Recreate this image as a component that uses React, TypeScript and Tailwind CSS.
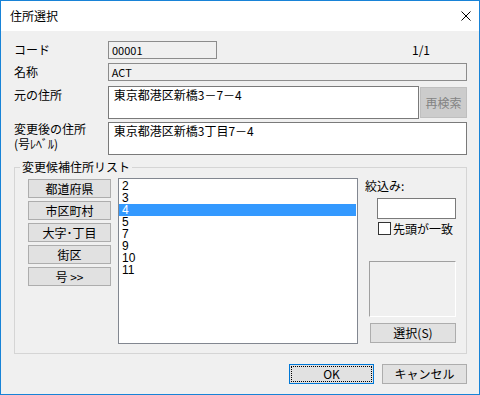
const jp = "font-['Noto_Sans_CJK_JP',sans-serif]";

function Btn({ label, className = "" }: { label: string; className?: string }) {
  return (
    <div
      className={`flex items-center justify-center bg-[#e1e1e1] border border-[#adadad] text-[12px] leading-[12px] text-black ${className}`}
    >
      {label}
    </div>
  );
}

const items = ["2", "3", "4", "5", "7", "9", "10", "11"];

export default function App() {
  return (
    <div className={`w-[480px] h-[395px] flex flex-col border border-[#1883d7] bg-[#f0f0f0] text-black ${jp}`}>
      {/* title bar */}
      <div className="h-[30px] bg-white flex items-center pl-[9px] pr-[8px]">
        <span className="text-[12px] leading-[14px]">住所選択</span>
        <svg className="ml-auto" width="10" height="10" viewBox="0 0 10 10">
          <path d="M0.5 0.5 L9.5 9.5 M9.5 0.5 L0.5 9.5" stroke="#000" strokeWidth="1" fill="none" />
        </svg>
      </div>

      <div className="flex flex-col pl-[13px] pr-[12px]">
        {/* コード */}
        <div className="mt-[10px] flex items-center h-[18px]">
          <span className="w-[94px] text-[12px] leading-[12px]">コード</span>
          <div className="w-[109px] h-[18px] border border-[#8c8c8c] bg-[#f0f0f0] pl-[3px] text-[11px] leading-[16px]">
            00001
          </div>
          <span className="ml-[195px] text-[12px] leading-[12px]">1/1</span>
        </div>

        {/* 名称 */}
        <div className="mt-[4px] flex items-center h-[18px]">
          <span className="w-[94px] text-[12px] leading-[12px]">名称</span>
          <div className="w-[360px] h-[18px] border border-[#8c8c8c] bg-[#f0f0f0] pl-[3px] text-[11px] leading-[16px]">
            ACT
          </div>
        </div>

        {/* 元の住所 */}
        <div className="mt-[5px] flex h-[33px]">
          <span className="w-[94px] pt-[3px] text-[12px] leading-[12px]">元の住所</span>
          <div className="w-[312px] h-[33px] border border-[#7a7a7a] bg-white pl-[5px] pt-[1px] text-[12px] leading-[14px]">
            東京都港区新橋3－7－4
          </div>
          <div className="ml-[1px] mt-[1px] w-[47px] h-[31px] flex items-center justify-center bg-[#cccccc] border border-[#bfbfbf] text-[12px] text-[#838383]">
            再検索
          </div>
        </div>

        {/* 変更後の住所 */}
        <div className="mt-[3px] flex h-[33px]">
          <div className="w-[94px] flex flex-col text-[12px] leading-[15px] -mt-[1px]">
            <span>変更後の住所</span>
            <span>(号ﾚﾍﾞﾙ)</span>
          </div>
          <div className="w-[360px] h-[33px] border border-[#7a7a7a] bg-white pl-[5px] pt-[1px] text-[12px] leading-[14px]">
            東京都港区新橋3丁目7－4
          </div>
        </div>

        {/* group */}
        <fieldset className="mt-[6px] w-[453px] border border-[#d5d5d5]">
          <legend className="ml-[5px] px-[2px] text-[12px] leading-[12px]">変更候補住所リスト</legend>
          <div className="flex pl-[13px] pt-[5px] pb-[9px]">
            <div className="mt-[1px] w-[83px] flex flex-col gap-[3px]">
              <Btn label="都道府県" className="h-[19px]" />
              <Btn label="市区町村" className="h-[19px]" />
              <Btn label="大字･丁目" className="h-[19px]" />
              <Btn label="街区" className="h-[19px]" />
              <Btn label="号 >>" className="h-[19px]" />
            </div>

            <div className="ml-[7px] w-[240px] h-[166px] border border-[#828790] bg-white pt-[1px] font-['Liberation_Sans',sans-serif]">
              {items.map((it) => (
                <div
                  key={it}
                  className={`h-[12px] pl-[3px] text-[12px] leading-[12px] ${it === "4" ? "bg-[#3399ff] text-white mr-[1px]" : ""}`}
                >
                  {it}
                </div>
              ))}
            </div>

            <div className="ml-[7px] flex flex-col">
              <span className="mt-[2px] text-[12px] leading-[12px]">絞込み:</span>
              <div className="mt-[6px] ml-[12px] w-[79px] h-[21px] border border-[#7a7a7a] bg-white" />
              <div className="mt-[3px] ml-[13px] flex items-center h-[13px]">
                <div className="w-[13px] h-[13px] border border-[#333333] bg-white" />
                <span className="ml-[2px] text-[12px] leading-[12px]">先頭が一致</span>
              </div>
              <div className="mt-[26px] ml-[4px] w-[87px] h-[56px] border border-t-[#a0a0a0] border-l-[#a0a0a0] border-r-white border-b-white" />
              <Btn label="選択(S)" className="mt-[6px] ml-[5px] w-[86px] h-[20px]" />
            </div>
          </div>
        </fieldset>

        {/* bottom buttons */}
        <div className="mt-[10px] flex justify-end gap-[8px]">
          <div className="w-[85px] h-[20px] flex items-center justify-center bg-[#e1e1e1] border border-[#0078d7] outline-1 outline-dotted outline-black -outline-offset-3 text-[12px] leading-[12px]">
            OK
          </div>
          <Btn label="キャンセル" className="w-[85px] h-[20px]" />
        </div>
      </div>
    </div>
  );
}
